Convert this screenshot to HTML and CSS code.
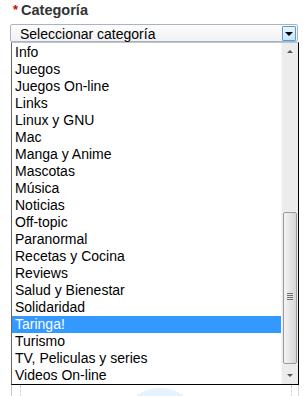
FILE: index.html
```html
<!DOCTYPE html>
<html>
<head>
  <meta charset="UTF-8">
  <title>Categoría</title>
  <link rel="stylesheet" href="styles.css">
</head>
<body>
  <div class="field">
    <div class="label"><span class="req">*</span>Categoría</div>

    <div class="select">
      <span class="select-text">Seleccionar categoría</span>
      <span class="select-btn"><span class="tri-down"></span></span>
    </div>

    <div class="dropdown">
      <ul class="options">
        <li>Info</li>
        <li>Juegos</li>
        <li>Juegos On-line</li>
        <li>Links</li>
        <li>Linux y GNU</li>
        <li>Mac</li>
        <li>Manga y Anime</li>
        <li>Mascotas</li>
        <li>Música</li>
        <li>Noticias</li>
        <li>Off-topic</li>
        <li>Paranormal</li>
        <li>Recetas y Cocina</li>
        <li>Reviews</li>
        <li>Salud y Bienestar</li>
        <li>Solidaridad</li>
        <li class="selected">Taringa!</li>
        <li>Turismo</li>
        <li>TV, Peliculas y series</li>
        <li>Videos On-line</li>
      </ul>
      <div class="scrollbar">
        <div class="arrow"><span class="tri-up small"></span></div>
        <div class="track">
          <div class="thumb"><span class="grip"></span></div>
        </div>
        <div class="arrow"><span class="tri-down small"></span></div>
      </div>
    </div>

    <div class="below">
      <div class="below-inner"></div>
    </div>
  </div>
</body>
</html>
```

FILE: styles.css
```css
body {
  margin: 0;
  background: #fff;
  font-family: "Liberation Sans", Arial, sans-serif;
  font-size: 14px;
  color: #000;
}

.field {
  padding-left: 10px;
}

.label {
  height: 24px;
  padding-top: 2px;
  box-sizing: border-box;
  line-height: 16px;
  font-weight: bold;
  font-size: 14.5px;
  color: #333;
  padding-left: 3px;
}

.req {
  color: #d40000;
  margin-right: 3px;
  font-size: 13px;
  position: relative;
  top: -1px;
}

.select {
  display: flex;
  align-items: center;
  width: 288px;
  height: 18px;
  box-sizing: border-box;
  border: 1px solid #a9b4c2;
  border-radius: 2px;
  background: linear-gradient(#fdfdfd, #f1f1f1);
}

.select-text {
  flex: 1;
  padding-left: 9px;
  padding-top: 1px;
  line-height: 16px;
}

.select-btn {
  width: 14px;
  height: 15px;
  margin-right: 1px;
  margin-top: 1px;
  box-sizing: border-box;
  border: 1px solid #5b9bd5;
  border-radius: 1px;
  background: linear-gradient(#eaf6fd, #c5e6fb);
  display: flex;
  align-items: center;
  justify-content: center;
}

.tri-down {
  width: 0;
  height: 0;
  border-left: 4px solid transparent;
  border-right: 4px solid transparent;
  border-top: 4px solid #000;
}

.tri-up {
  width: 0;
  height: 0;
  border-left: 4px solid transparent;
  border-right: 4px solid transparent;
  border-bottom: 4px solid #000;
}

.tri-down.small {
  border-left-width: 3px;
  border-right-width: 3px;
  border-top: 3px solid #555;
}

.tri-up.small {
  border-left-width: 3px;
  border-right-width: 3px;
  border-bottom: 3px solid #555;
}

.dropdown {
  display: flex;
  margin-left: 1px;
  width: 288px;
  box-sizing: border-box;
  border: 1px solid #000;
  border-left-color: #666;
  border-top: 1px solid #b9c4d0;
}

.options {
  list-style: none;
  margin: 0;
  padding: 1px 0 0;
  width: 270px;
}

.options li {
  height: 17px;
  line-height: 17px;
  padding-left: 3px;
  white-space: nowrap;
}

.options li.selected {
  background: #3399ff;
  color: #fff;
}

.scrollbar {
  width: 16px;
  display: flex;
  flex-direction: column;
  background: #ececec;
  border-left: 1px solid #f6f6f6;
}

.arrow {
  height: 17px;
  display: flex;
  align-items: center;
  justify-content: center;
}

.track {
  flex: 1;
  padding-top: 152px;
  padding-bottom: 1px;
}

.thumb {
  height: 152px;
  margin: 0 1px;
  box-sizing: border-box;
  border: 1px solid #9a9a9a;
  border-radius: 2px;
  background: linear-gradient(90deg, #f4f4f4, #e2e2e2 60%, #d6d6d6);
  display: flex;
  align-items: center;
  justify-content: center;
}

.grip {
  width: 6px;
  height: 7px;
  margin-top: 16px;
  background: repeating-linear-gradient(#6f6f6f 0 1px, transparent 1px 2px);
}

.below {
  margin-left: 1px;
  width: 288px;
  height: 12px;
  box-sizing: border-box;
  border-left: 1px solid #c9c9c9;
  border-right: 1px solid #d6d6d6;
  padding: 0 6px 0 8px;
  overflow: hidden;
  position: relative;
}

.below-inner {
  height: 100%;
  border-left: 1px dashed #d0d0d0;
  border-right: 1px dashed #d0d0d0;
}

.below::after {
  content: "";
  position: absolute;
  left: 108px;
  top: 3px;
  width: 80px;
  height: 80px;
  border-radius: 50%;
  background: #e6f3fc;
}
```
